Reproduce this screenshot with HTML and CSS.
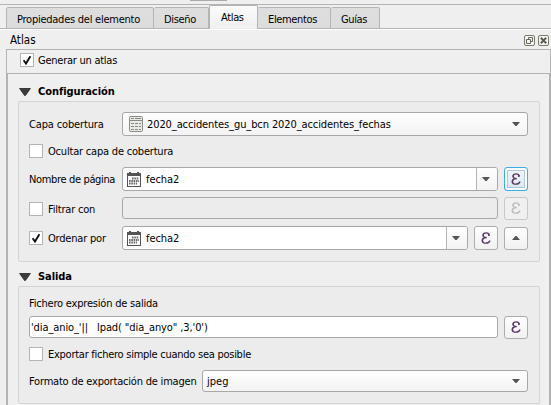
FILE: index.html
```html
<!DOCTYPE html>
<html lang="es">
<head>
<meta charset="utf-8">
<title>Atlas</title>
<link rel="stylesheet" href="styles.css">
</head>
<body>
<svg class="defs" width="0" height="0">
  <symbol id="check" viewBox="0 0 14 14"><path d="M3.6 7.2L6 10.6L10.4 3.2" fill="none" stroke="#111" stroke-width="1.9"/></symbol>
  <symbol id="down" viewBox="0 0 8 4"><path d="M0 0H8L4.6 4H3.4Z" fill="#555"/></symbol>
  <symbol id="up" viewBox="0 0 8 4"><path d="M0 4H8L4.6 0H3.4Z" fill="#555"/></symbol>
  <symbol id="fold" viewBox="0 0 12 8"><path d="M.6 .5H11.4L6.4 7.5H5.6Z" fill="#3c3c3c" stroke="#222" stroke-width=".8"/></symbol>
  <symbol id="calendar" viewBox="0 0 14 15"><path d="M0 1h2v-1h2v1h6v-1h2v1h2v14H0Z" fill="#555"/><path d="M1 4h12v10H1Z" fill="#fff"/><path d="M5 6.500h7M2 9h10M2 11.500h8" stroke="#6a6a6a" stroke-width="1.800" stroke-dasharray="1.600 .7"/></symbol>
  <symbol id="table" viewBox="0 0 14 16"><rect x=".5" y=".5" width="13" height="15" rx="1" fill="#e9e9e6" stroke="#888a85"/><path d="M1 4.500h12" stroke="#888a85"/><path d="M2 2.500h3M6 2.500h6M2 7.500h3M6 7.500h3M10 7.500h2M2 10.500h3M6 10.500h3M10 10.500h2M2 13.500h3M6 13.500h3M10 13.500h2" stroke="#888a85"/></symbol>
  <symbol id="epsilon" viewBox="0 0 10 12"><path d="M8.300 3.400C8 1.600 6.800 .9 5.200 .9C3.300 .9 2 1.800 2 3.300C2 4.800 3.200 5.600 5.800 5.600C2.800 5.600 1.200 6.600 1.200 8.400C1.200 10.200 2.800 11.100 5 11.100C7.200 11.100 8.600 10.200 9 8.500" fill="none" stroke="currentColor" stroke-width="1.300"/><path d="M2.700 1.800Q1.600 3.300 2.700 4.800M2.100 6.800Q.9 8.500 2.100 10.200" fill="none" stroke="currentColor" stroke-width="1.200"/><circle cx="7.800" cy="2.900" r="1" fill="currentColor"/></symbol>
</svg>
<div class="splitter"><span class="handle"></span></div>
<nav class="tabs">
  <span class="tab t-prop">Propiedades del elemento</span>
  <span class="tab t-dis">Diseño</span>
  <span class="tab t-atlas active">Atlas</span>
  <span class="tab t-elem">Elementos</span>
  <span class="tab t-guias">Guías</span>
</nav>
<header class="dock-title">
  <span>Atlas</span>
  <svg width="11" height="11" viewBox="0 0 11 11"><rect x=".5" y=".5" width="10" height="10" rx="1.500" fill="#f5f5f2" stroke="#77776d"/><path d="M4.500 4.500V2.500H8.500V6.500H6.500M2.500 4.500H6.500V8.500H2.500Z" fill="none" stroke="#66665d"/></svg>
  <svg width="11" height="11" viewBox="0 0 11 11"><rect x=".5" y=".5" width="10" height="10" rx="1.500" fill="#f5f5f2" stroke="#77776d"/><path d="M2.800 2.800L8.200 8.200M8.200 2.800L2.800 8.200" stroke="#5c5c53" stroke-width="2"/></svg>
</header>
<div class="generate"><span class="check"><svg><use href="#check"/></svg></span><span class="s-gen">Generar un atlas</span></div>
<main class="scroll">
  <h2><svg><use href="#fold"/></svg><span class="s-conf">Configuración</span></h2>
  <section class="group config">
    <div class="row r-capa"><label class="s-capa">Capa cobertura</label>
      <div class="combo"><svg class="table-icon"><use href="#table"/></svg><span class="s-layer">2020_accidentes_gu_bcn 2020_accidentes_fechas</span><svg class="arrow"><use href="#down"/></svg></div></div>
    <div class="row r-ocultar"><span class="check"></span><span class="s-ocultar">Ocultar capa de cobertura</span></div>
    <div class="row r-nombre"><label class="s-nombre">Nombre de página</label>
      <div class="combo edit"><svg class="cal-icon"><use href="#calendar"/></svg><span class="s-fecha">fecha2</span><b class="drop"><svg class="arrow"><use href="#down"/></svg></b></div>
      <button class="focus"><svg class="eps"><use href="#epsilon"/></svg></button></div>
    <div class="row r-filtrar"><label><span class="check"></span><span class="s-filtrar">Filtrar con</span></label>
      <div class="field disabled"></div><button class="off"><svg class="eps"><use href="#epsilon"/></svg></button></div>
    <div class="row r-ordenar"><label><span class="check"><svg><use href="#check"/></svg></span><span class="s-ordenar">Ordenar por</span></label>
      <div class="combo edit"><svg class="cal-icon"><use href="#calendar"/></svg><span class="s-fecha">fecha2</span><b class="drop"><svg class="arrow"><use href="#down"/></svg></b></div>
      <button><svg class="eps"><use href="#epsilon"/></svg></button><button class="short"><svg class="up"><use href="#up"/></svg></button></div>
  </section>
  <h2 class="second"><svg><use href="#fold"/></svg><span class="s-salida">Salida</span></h2>
  <section class="group output">
    <div class="row r-fichero"><span class="s-fichero">Fichero expresión de salida</span></div>
    <div class="row r-expr"><div class="field"><span class="s-expr">'dia_anio_'||&nbsp;&nbsp; lpad( "dia_anyo" ,3,'0')</span></div><button class="short"><svg class="eps"><use href="#epsilon"/></svg></button></div>
    <div class="row r-export"><span class="check"></span><span class="s-export">Exportar fichero simple cuando sea posible</span></div>
    <div class="row r-formato"><label class="s-formato">Formato de exportación de imagen</label><div class="combo"><span class="s-jpeg">jpeg</span><svg class="arrow"><use href="#down"/></svg></div></div>
  </section>
</main>
</body>
</html>
```
FILE: styles.css
```css
* { box-sizing: border-box; }
html, body { height: 100%; }
body {
  margin: 0;
  overflow: hidden;
  background: #efefef;
  color: #000;
  font: 11px/14px "DejaVu Sans Condensed", "DejaVu Sans", sans-serif;
  letter-spacing: -.2px;
  white-space: nowrap;
}
svg { display: block; flex: none; }
.defs { display: none; }

.splitter { height: 5px; border-bottom: 1px solid #b4b4b4; }
.handle { display: block; width: 37px; height: 1px; margin-left: 190px; background: #aaa; }

.tabs { display: flex; align-items: flex-end; height: 24px; padding-left: 6px; box-shadow: inset 0 -1px #b4b4b4; }
.tab {
  height: 22px;
  padding: 5px 0 0 11px;
  border: 1px solid #b4b4b4;
  border-left-width: 0;
  border-radius: 2px 2px 0 0;
  background: linear-gradient(#dedede, #dcdcdc);
  letter-spacing: -.35px;
}
.t-prop { width: 148px; padding-left: 10px; border-left-width: 1px; letter-spacing: -.25px; }
.t-dis { width: 55px; padding-left: 10px; }
.t-atlas { width: 49px; }
.t-elem { width: 73px; padding-left: 10px; }
.t-guias { width: 49px; padding-left: 10px; letter-spacing: -.4px; }
.tab.active { height: 24px; padding-left: 11px; border-left-width: 1px; border-bottom: 0; background: linear-gradient(#fbfbfb, #efefef); }

.dock-title { display: flex; align-items: center; gap: 3px; height: 21px; padding: 0 2px 0 10px; border-top: 1px solid #fff; }
.dock-title span { flex: 1; font-size: 11.5px; letter-spacing: 0; }

.generate { display: flex; align-items: center; gap: 4px; height: 25px; margin: -1px 0 0 6px; padding: 0 0 4px 13px; border: 1px solid #b4b4b4; }
.check { flex: none; width: 14px; height: 14px; border: 1px solid #b4b4b4; background: #fff; }
.check svg { width: 14px; height: 14px; margin: -1px; }

.scroll { height: 331px; margin: 0 0 0 6px; padding: 0 10px; border: solid #b4b4b4; border-width: 0 2px; }
h2 { display: flex; align-items: center; gap: 7px; height: 27px; margin: 0; padding: 7px 0 0 1px; font: bold 11px/14px "DejaVu Sans Condensed", "DejaVu Sans", sans-serif; letter-spacing: -.07px; }
h2 svg { width: 12px; height: 8px; margin-top: 2px; }
h2.second { height: 24px; padding-top: 4px; }

.group { width: 522px; border: 1px solid #d4d4d4; border-radius: 2px; background: #ececec; padding: 0 11px 0 10px; }
.config { height: 161px; padding-top: 10px; }
.output { height: 118px; padding-top: 9px; }
.row { display: flex; align-items: center; }
.row label { display: flex; align-items: center; flex: none; width: 93px; }
.row .check + span { margin-left: 5px; }
.r-capa { height: 24px; }
.r-ocultar { height: 14px; margin: 8px 0 9px; }
.r-nombre { height: 24px; }
.r-filtrar { height: 23px; margin: 6px 0; }
.r-filtrar .field { align-self: flex-start; }
.r-ordenar { height: 24px; }
.r-fichero { height: 14px; margin-bottom: 6px; }
.r-expr { height: 23px; align-items: flex-start; }
.r-export { height: 14px; margin: 8px 0 9px; }
.r-formato { height: 22px; }
.row .s-formato { width: 173px; }

[class^="s-"] { padding-top: 2px; }
.s-gen { letter-spacing: -.25px; }
.s-capa { letter-spacing: -.15px; }
.s-layer { letter-spacing: -.1px; }
.s-nombre { letter-spacing: -.35px; }
.s-filtrar { letter-spacing: -.2px; }
.s-fecha { letter-spacing: -.05px; }
.s-expr { letter-spacing: -.1px; }
.s-export { letter-spacing: -.26px; }

.combo, .field {
  display: flex;
  align-items: center;
  flex: 1;
  align-self: stretch;
  border: 1px solid #a8a8a8;
  border-radius: 3px;
  background: linear-gradient(#fefefe, #f3f3f3);
}
.combo > span { flex: 1; }
.combo > .arrow { margin-right: 7px; }
.combo.edit { background: #fff; }
.field { flex: 1; height: 22px; align-self: auto; padding-left: 1px; background: #fff; }
.field.disabled { background: #ececec; }
.drop { display: flex; align-items: center; justify-content: center; align-self: stretch; width: 21px; border-left: 1px solid #b4b4b4; border-radius: 0 2px 2px 0; background: linear-gradient(#fefefe, #f3f3f3); }
.drop .arrow { margin-right: 2px; }
.arrow, .up { width: 8px; height: 4px; }
.table-icon { width: 14px; height: 16px; margin: 0 4px 0 6px; }
.cal-icon { width: 14px; height: 15px; margin: 0 5px 0 4px; }
.s-jpeg { padding-left: 4px; letter-spacing: 0; }

button {
  display: flex;
  align-items: center;
  justify-content: center;
  flex: none;
  width: 24px;
  height: 24px;
  margin: 0 0 0 6px;
  padding: 0;
  border: 1px solid #adadad;
  border-radius: 3px;
  background: linear-gradient(#fefefe, #f1f1f1);
  color: #5b3a66;
}
button.short, button.off { height: 23px; }
.eps { width: 10px; height: 12px; margin-top: -1px; }
button.focus { border-color: #3daee9; background: linear-gradient(#f5f8fc, #d9e5f2); box-shadow: inset 0 0 0 2px #fafcfe, inset 0 0 0 3px #adc9e2; }
button.off { border-color: #c8c8c8; background: #f0f0f0; color: #bdbdbd; }
```
